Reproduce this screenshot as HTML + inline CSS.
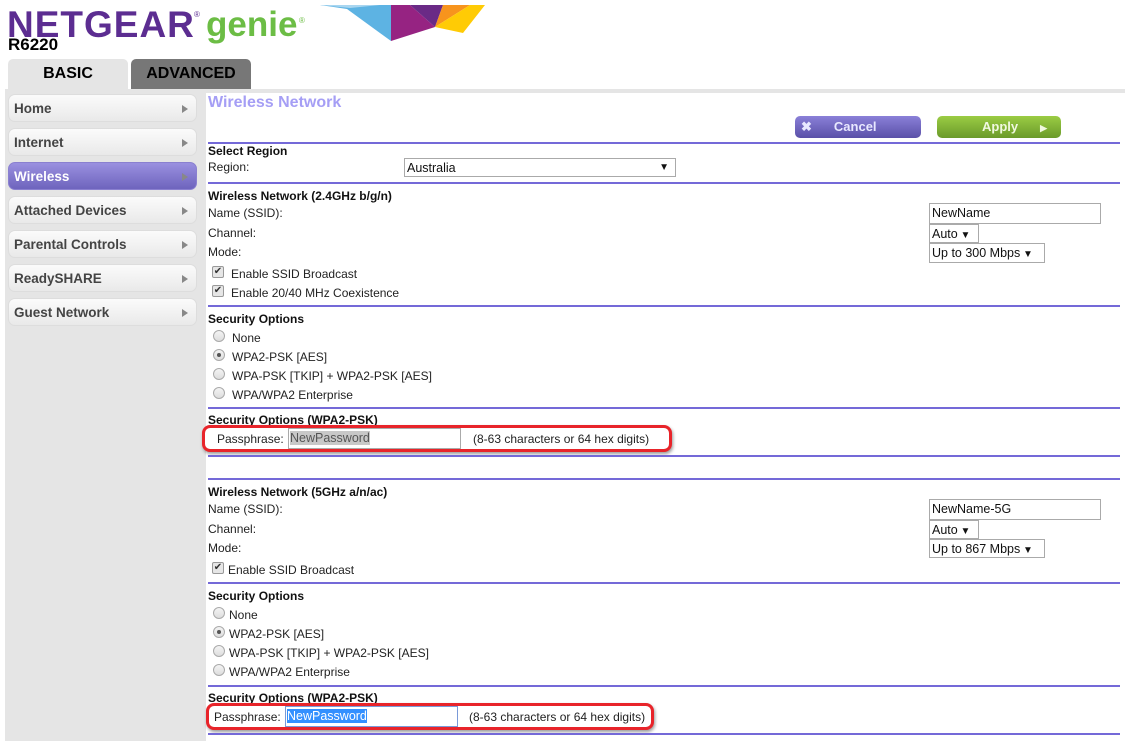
<!DOCTYPE html>
<html><head><meta charset="utf-8"><style>
*{margin:0;padding:0;box-sizing:border-box}
body{width:1125px;height:741px;background:#fff;font-family:"Liberation Sans",Arial,sans-serif;font-size:12px;color:#222;position:relative;overflow:hidden}
.a{position:absolute;white-space:nowrap}
.b{font-weight:bold;color:#111}
.hr{position:absolute;left:208px;width:912px;height:2px;background:#7469d8}
.nav{position:absolute;left:8px;width:189px;height:28px;border-radius:7px;background:linear-gradient(#fbfbfb,#e9e9e9);border:1px solid #ddd;font-weight:bold;font-size:13.5px;color:#444;padding:6px 0 0 5px}
.nav:after{content:"";position:absolute;right:8px;top:10px;border-left:6px solid #888;border-top:4px solid transparent;border-bottom:4px solid transparent}
.inp{position:absolute;border:1px solid #aaa;background:#fff;font-size:12.5px;padding:2px 2px;color:#111}
.sel:after{content:" ▼";font-size:10px}
.rad{position:absolute;width:12px;height:12px;border-radius:50%;border:1px solid #aaa;background:linear-gradient(#f4f4f4,#ddd)}
.rad.on:after{content:"";position:absolute;left:3px;top:3px;width:4px;height:4px;border-radius:50%;background:#555}
.chk{position:absolute;width:12px;height:12px;border:1px solid #999;background:#e6e6e6;border-radius:2px;font-size:10px;line-height:10px;text-align:center;color:#333}
.red{position:absolute;border:3px solid #e8242a;border-radius:8px;box-shadow:1px 2px 3px rgba(0,0,0,.4)}
</style></head><body>
<div class="a" style="left:7px;top:4px;font-size:37px;font-weight:bold;color:#5c2d91;letter-spacing:1px">NETGEAR</div>
<div class="a" style="left:194px;top:10px;font-size:8px;color:#5c2d91">®</div>
<div class="a" style="left:206px;top:5px;font-size:35px;font-weight:bold;color:#6cbd45">genie</div>
<div class="a" style="left:299px;top:16px;font-size:8px;color:#6cbd45">®</div>
<div class="a" style="left:8px;top:35px;font-size:17px;font-weight:bold;color:#000">R6220</div>
<svg class="a" style="left:0;top:0" width="500" height="50">
<polygon points="320,5 391,5 391,41 347,9" fill="#5db3e3"/>
<polygon points="320,5 380,5 350,8" fill="#a9d6f0"/>
<polygon points="391,5 410,5 435,27 391,41" fill="#962382"/>
<polygon points="410,5 443,5 435,27" fill="#6a2a86"/>
<polygon points="443,5 470,5 435,27" fill="#f7941d"/>
<polygon points="470,5 485,5 463,33 435,27" fill="#ffcb05"/>
</svg>
<div class="a" style="left:8px;top:59px;width:120px;height:31px;background:#e5e5e5;border-radius:5px 5px 0 0;font-size:16px;font-weight:bold;color:#000;text-align:center;padding-top:6px">BASIC</div>
<div class="a" style="left:131px;top:59px;width:120px;height:31px;background:#777;border-radius:5px 5px 0 0;font-size:16px;font-weight:bold;color:#000;text-align:center;padding-top:6px">ADVANCED</div>
<div class="a" style="left:5px;top:89px;width:1120px;height:4px;background:#e5e5e5"></div>
<div class="a" style="left:5px;top:89px;width:201px;height:652px;background:#e5e5e5"></div>
<div class="nav" style="top:94px">Home</div>
<div class="nav" style="top:128px">Internet</div>
<div class="nav" style="top:162px;background:linear-gradient(#9a90e0,#6e64bd);color:#fff;border-color:#8a80d0">Wireless</div>
<div class="nav" style="top:196px">Attached Devices</div>
<div class="nav" style="top:230px">Parental Controls</div>
<div class="nav" style="top:264px">ReadySHARE</div>
<div class="nav" style="top:298px">Guest Network</div>

<div class="a" style="left:208px;top:94px;font-size:16px;font-weight:bold;color:#a59ef5">Wireless Network</div>
<div class="a" style="left:795px;top:116px;width:126px;height:22px;border-radius:5px;background:linear-gradient(#8a80d8,#5a50a8);color:#e8e8ff;font-weight:bold;font-size:13px;padding-top:3px"><span style="margin-left:6px">✖</span><span style="margin-left:22px">Cancel</span></div>
<div class="a" style="left:937px;top:116px;width:124px;height:22px;border-radius:5px;background:linear-gradient(#9bcc44,#6a9a2a);color:#f0f8e0;font-weight:bold;font-size:13px;padding-top:3px"><span style="margin-left:45px">Apply</span><span style="margin-left:22px;font-size:9px">▶</span></div>
<div class="hr" style="top:142px"></div>
<div class="a b" style="left:208px;top:144px">Select Region</div>
<div class="a" style="left:208px;top:160px">Region:</div>
<div class="inp" style="left:404px;top:158px;width:272px;height:19px">Australia<span style="position:absolute;right:6px;font-size:10px;top:3px">▼</span></div>
<div class="hr" style="top:182px"></div>
<div class="a b" style="left:208px;top:189px">Wireless Network (2.4GHz b/g/n)</div>
<div class="a" style="left:208px;top:206px">Name (SSID):</div>
<div class="a" style="left:208px;top:226px">Channel:</div>
<div class="a" style="left:208px;top:245px">Mode:</div>
<div class="inp" style="left:929px;top:203px;width:172px;height:21px">NewName</div>
<div class="inp sel" style="left:929px;top:224px;width:50px;height:19px">Auto</div>
<div class="inp sel" style="left:929px;top:243px;width:116px;height:20px">Up to 300 Mbps</div>
<div class="chk" style="left:212px;top:266px">✔</div><div class="a" style="left:231px;top:267px">Enable SSID Broadcast</div>
<div class="chk" style="left:212px;top:285px">✔</div><div class="a" style="left:231px;top:286px">Enable 20/40 MHz Coexistence</div>
<div class="hr" style="top:305px"></div>
<div class="a b" style="left:208px;top:312px">Security Options</div>
<div class="rad" style="left:213px;top:330px"></div><div class="a" style="left:232px;top:331px">None</div>
<div class="rad on" style="left:213px;top:349px"></div><div class="a" style="left:232px;top:350px">WPA2-PSK [AES]</div>
<div class="rad" style="left:213px;top:368px"></div><div class="a" style="left:232px;top:369px">WPA-PSK [TKIP] + WPA2-PSK [AES]</div>
<div class="rad" style="left:213px;top:387px"></div><div class="a" style="left:232px;top:388px">WPA/WPA2 Enterprise</div>
<div class="hr" style="top:407px"></div>
<div class="a b" style="left:208px;top:413px">Security Options (WPA2-PSK)</div>
<div class="red" style="left:202px;top:425px;width:470px;height:27px;background:#fff"></div>
<div class="a" style="left:217px;top:432px">Passphrase:</div>
<div class="inp" style="left:288px;top:428px;width:173px;height:21px;padding:2px 1px"><span style="background:#c8c8c8;color:#555">NewPassword</span></div>
<div class="a" style="left:473px;top:432px">(8-63 characters or 64 hex digits)</div>
<div class="hr" style="top:455px"></div>
<div class="hr" style="top:478px"></div>
<div class="a b" style="left:208px;top:485px">Wireless Network (5GHz a/n/ac)</div>
<div class="a" style="left:208px;top:502px">Name (SSID):</div>
<div class="a" style="left:208px;top:522px">Channel:</div>
<div class="a" style="left:208px;top:541px">Mode:</div>
<div class="inp" style="left:929px;top:499px;width:172px;height:21px">NewName-5G</div>
<div class="inp sel" style="left:929px;top:520px;width:50px;height:19px">Auto</div>
<div class="inp sel" style="left:929px;top:539px;width:116px;height:19px">Up to 867 Mbps</div>
<div class="chk" style="left:212px;top:562px">✔</div><div class="a" style="left:228px;top:563px">Enable SSID Broadcast</div>
<div class="hr" style="top:582px"></div>
<div class="a b" style="left:208px;top:589px">Security Options</div>
<div class="rad" style="left:213px;top:607px"></div><div class="a" style="left:229px;top:608px">None</div>
<div class="rad on" style="left:213px;top:626px"></div><div class="a" style="left:229px;top:627px">WPA2-PSK [AES]</div>
<div class="rad" style="left:213px;top:645px"></div><div class="a" style="left:229px;top:646px">WPA-PSK [TKIP] + WPA2-PSK [AES]</div>
<div class="rad" style="left:213px;top:664px"></div><div class="a" style="left:229px;top:665px">WPA/WPA2 Enterprise</div>
<div class="hr" style="top:685px"></div>
<div class="a b" style="left:208px;top:691px">Security Options (WPA2-PSK)</div>
<div class="red" style="left:206px;top:703px;width:448px;height:27px;background:#fff"></div>
<div class="a" style="left:214px;top:710px">Passphrase:</div>
<div class="inp" style="left:285px;top:706px;width:173px;height:21px;border-color:#7a9ad8;padding:2px 1px"><span style="background:#3390ff;color:#fff">NewPassword</span></div>
<div class="a" style="left:469px;top:710px">(8-63 characters or 64 hex digits)</div>
<div class="hr" style="top:733px"></div>
</body></html>
